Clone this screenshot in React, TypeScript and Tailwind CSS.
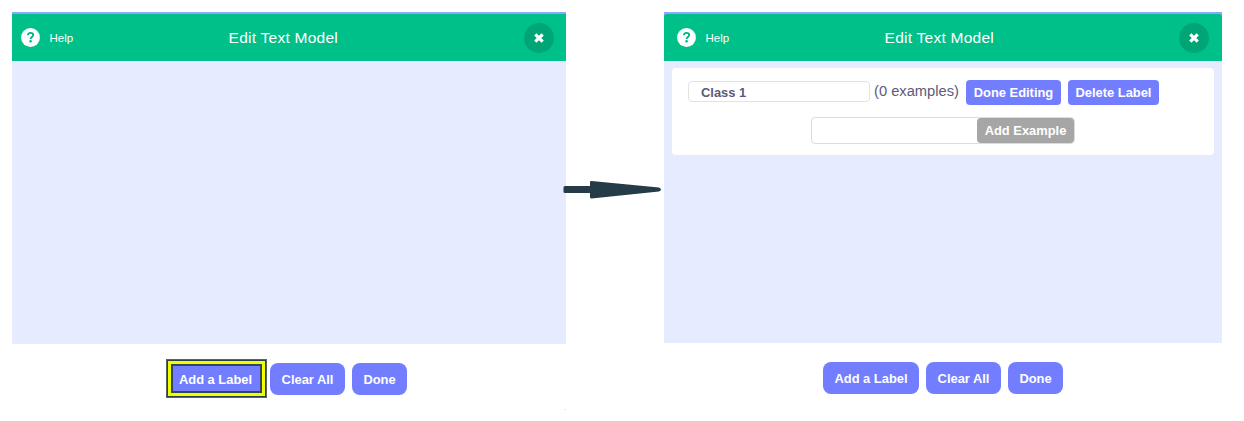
import React from "react";

function Header({ startClass, endClass }: { startClass: string; endClass: string }) {
  return (
    <header className="flex h-[47px] w-full items-center bg-[#00c089] text-white">
      <div className={`flex shrink-0 items-center ${startClass}`}>
        <svg className="size-[19px] shrink-0" viewBox="0 0 19 19" aria-hidden="true">
          <circle cx="9.5" cy="9.5" r="9.4" fill="#fff" />
          <path
            d="M6.9 7.1C7.1 5.6 8.1 4.9 9.5 4.9C11 4.9 12.2 5.8 12.2 7.1C12.2 9 9.6 8.9 9.6 10.9"
            fill="none"
            stroke="#00b582"
            strokeWidth="1.9"
          />
          <circle cx="9.6" cy="13.3" r="1.25" fill="#00b582" />
        </svg>
        <span className="ml-[9.5px] text-[11.5px] leading-4">Help</span>
      </div>
      <h1 className="text-[15.5px] leading-5 tracking-[0.25px] whitespace-nowrap">Edit Text Model</h1>
      <div className={`flex flex-1 justify-end ${endClass}`}>
        <button aria-label="Close" className="flex size-[30px] items-center justify-center rounded-full bg-[#00a576]">
          <svg className="size-[10px]" viewBox="0 0 10 10" aria-hidden="true">
            <path d="M1.3 1.3L8.7 8.7M8.7 1.3L1.3 8.7" stroke="#fff" strokeWidth="3.2" />
          </svg>
        </button>
      </div>
    </header>
  );
}

function ActionButton({ label, className }: { label: string; className: string }) {
  return (
    <button
      className={`flex h-8 shrink-0 items-center justify-center bg-[#727eff] text-[12.9px] font-bold whitespace-nowrap text-white ${className}`}
    >
      {label}
    </button>
  );
}

export default function App() {
  return (
    <div className="flex h-[421px] w-[1244px] items-start overflow-hidden bg-white pt-3 pl-3 font-['Liberation_Sans',Arial,sans-serif]">
      <section className="w-[554px] shrink-0">
        <div className="bg-[#8ea6ff] pt-[2px]">
          <Header startClass="w-[216.6px] pl-[9px]" endClass="pr-[12.5px]" />
        </div>
        <div className="h-[283px] bg-[#e6ebff]" />
        <div className="flex items-start pt-[15px] pl-[154px]">
          <div className="h-[39px] w-[101px] border border-[#56656a] bg-[#2b424d] p-px">
            <div className="h-full w-full bg-[#efff00] p-[3px]">
              <ActionButton label="Add a Label" className="h-full! w-full border-2 border-[#34465c] pt-[2px] pr-[2px]" />
            </div>
          </div>
          <ActionButton label="Clear All" className="mt-1 ml-[3px] w-[75px] rounded-[8px] pt-px" />
          <ActionButton label="Done" className="mt-1 ml-[7px] w-[55px] rounded-[8px] pt-px" />
        </div>
        <div className="mt-[11px] ml-auto h-px w-[2px] bg-[#e8e5ff]" />
      </section>

      <div className="flex h-[409px] w-[98px] shrink-0 items-start pt-[168px]">
        <svg className="-mx-[3px] h-[20px] w-[104px] shrink-0" viewBox="0 0 104 20" aria-hidden="true">
          <path
            d="M2 6H27V2Q27 1 28.5 1L96 7.6Q100 9.6 96 11.4L28.5 18.5Q27 18.5 27 17V13H2Q.5 13 .5 11.5V7.5Q.5 6 2 6Z"
            fill="#253b48"
          />
        </svg>
      </div>

      <section className="w-[558px] shrink-0">
        <div className="overflow-hidden bg-[#8ea6ff] pt-[2px]">
          <div className="overflow-hidden rounded-t-[3px]">
            <Header startClass="w-[220.6px] pl-[13px]" endClass="pr-[13.5px]" />
          </div>
        </div>
        <div className="h-[282px] bg-[#e6ebff] px-2 pt-[7px]">
          <div className="h-[87px] rounded-[4px] bg-white pt-3 text-[#5c5a78]">
            <div className="flex items-start pl-4">
              <input
                aria-label="Label name"
                defaultValue="Class 1"
                className="mt-px h-[21px] w-[182px] rounded-[4px] border border-[#e2e2e2] bg-white pt-px pl-[12px] text-[12.9px] font-bold text-[#5c5a78] outline-none"
              />
              <span className="ml-[4px] w-[87px] text-[14.7px] leading-[23px] whitespace-nowrap">(0 examples)</span>
              <ActionButton label="Done Editing" className="ml-[5px] h-[25px]! w-[95px] rounded-[4px]" />
              <ActionButton label="Delete Label" className="ml-[7px] h-[25px]! w-[91px] rounded-[4px]" />
            </div>
            <div className="mt-[12px] ml-[139px] flex h-[27px] w-[264px] justify-end rounded-[4px] border border-[#dcdcdc]">
              <input aria-label="New example" className="min-w-0 flex-1 px-3 text-[13px] outline-none" />
              <ActionButton label="Add Example" className="h-[25px]! w-[97px] rounded-[4px] bg-[#a6a6a6]!" />
            </div>
          </div>
        </div>
        <div className="flex pt-[19px] pl-[159px]">
          <ActionButton label="Add a Label" className="w-[96px] rounded-[8px] pt-px" />
          <ActionButton label="Clear All" className="ml-[7px] w-[75px] rounded-[8px] pt-px" />
          <ActionButton label="Done" className="ml-[7px] w-[55px] rounded-[8px] pt-px" />
        </div>
      </section>
    </div>
  );
}
